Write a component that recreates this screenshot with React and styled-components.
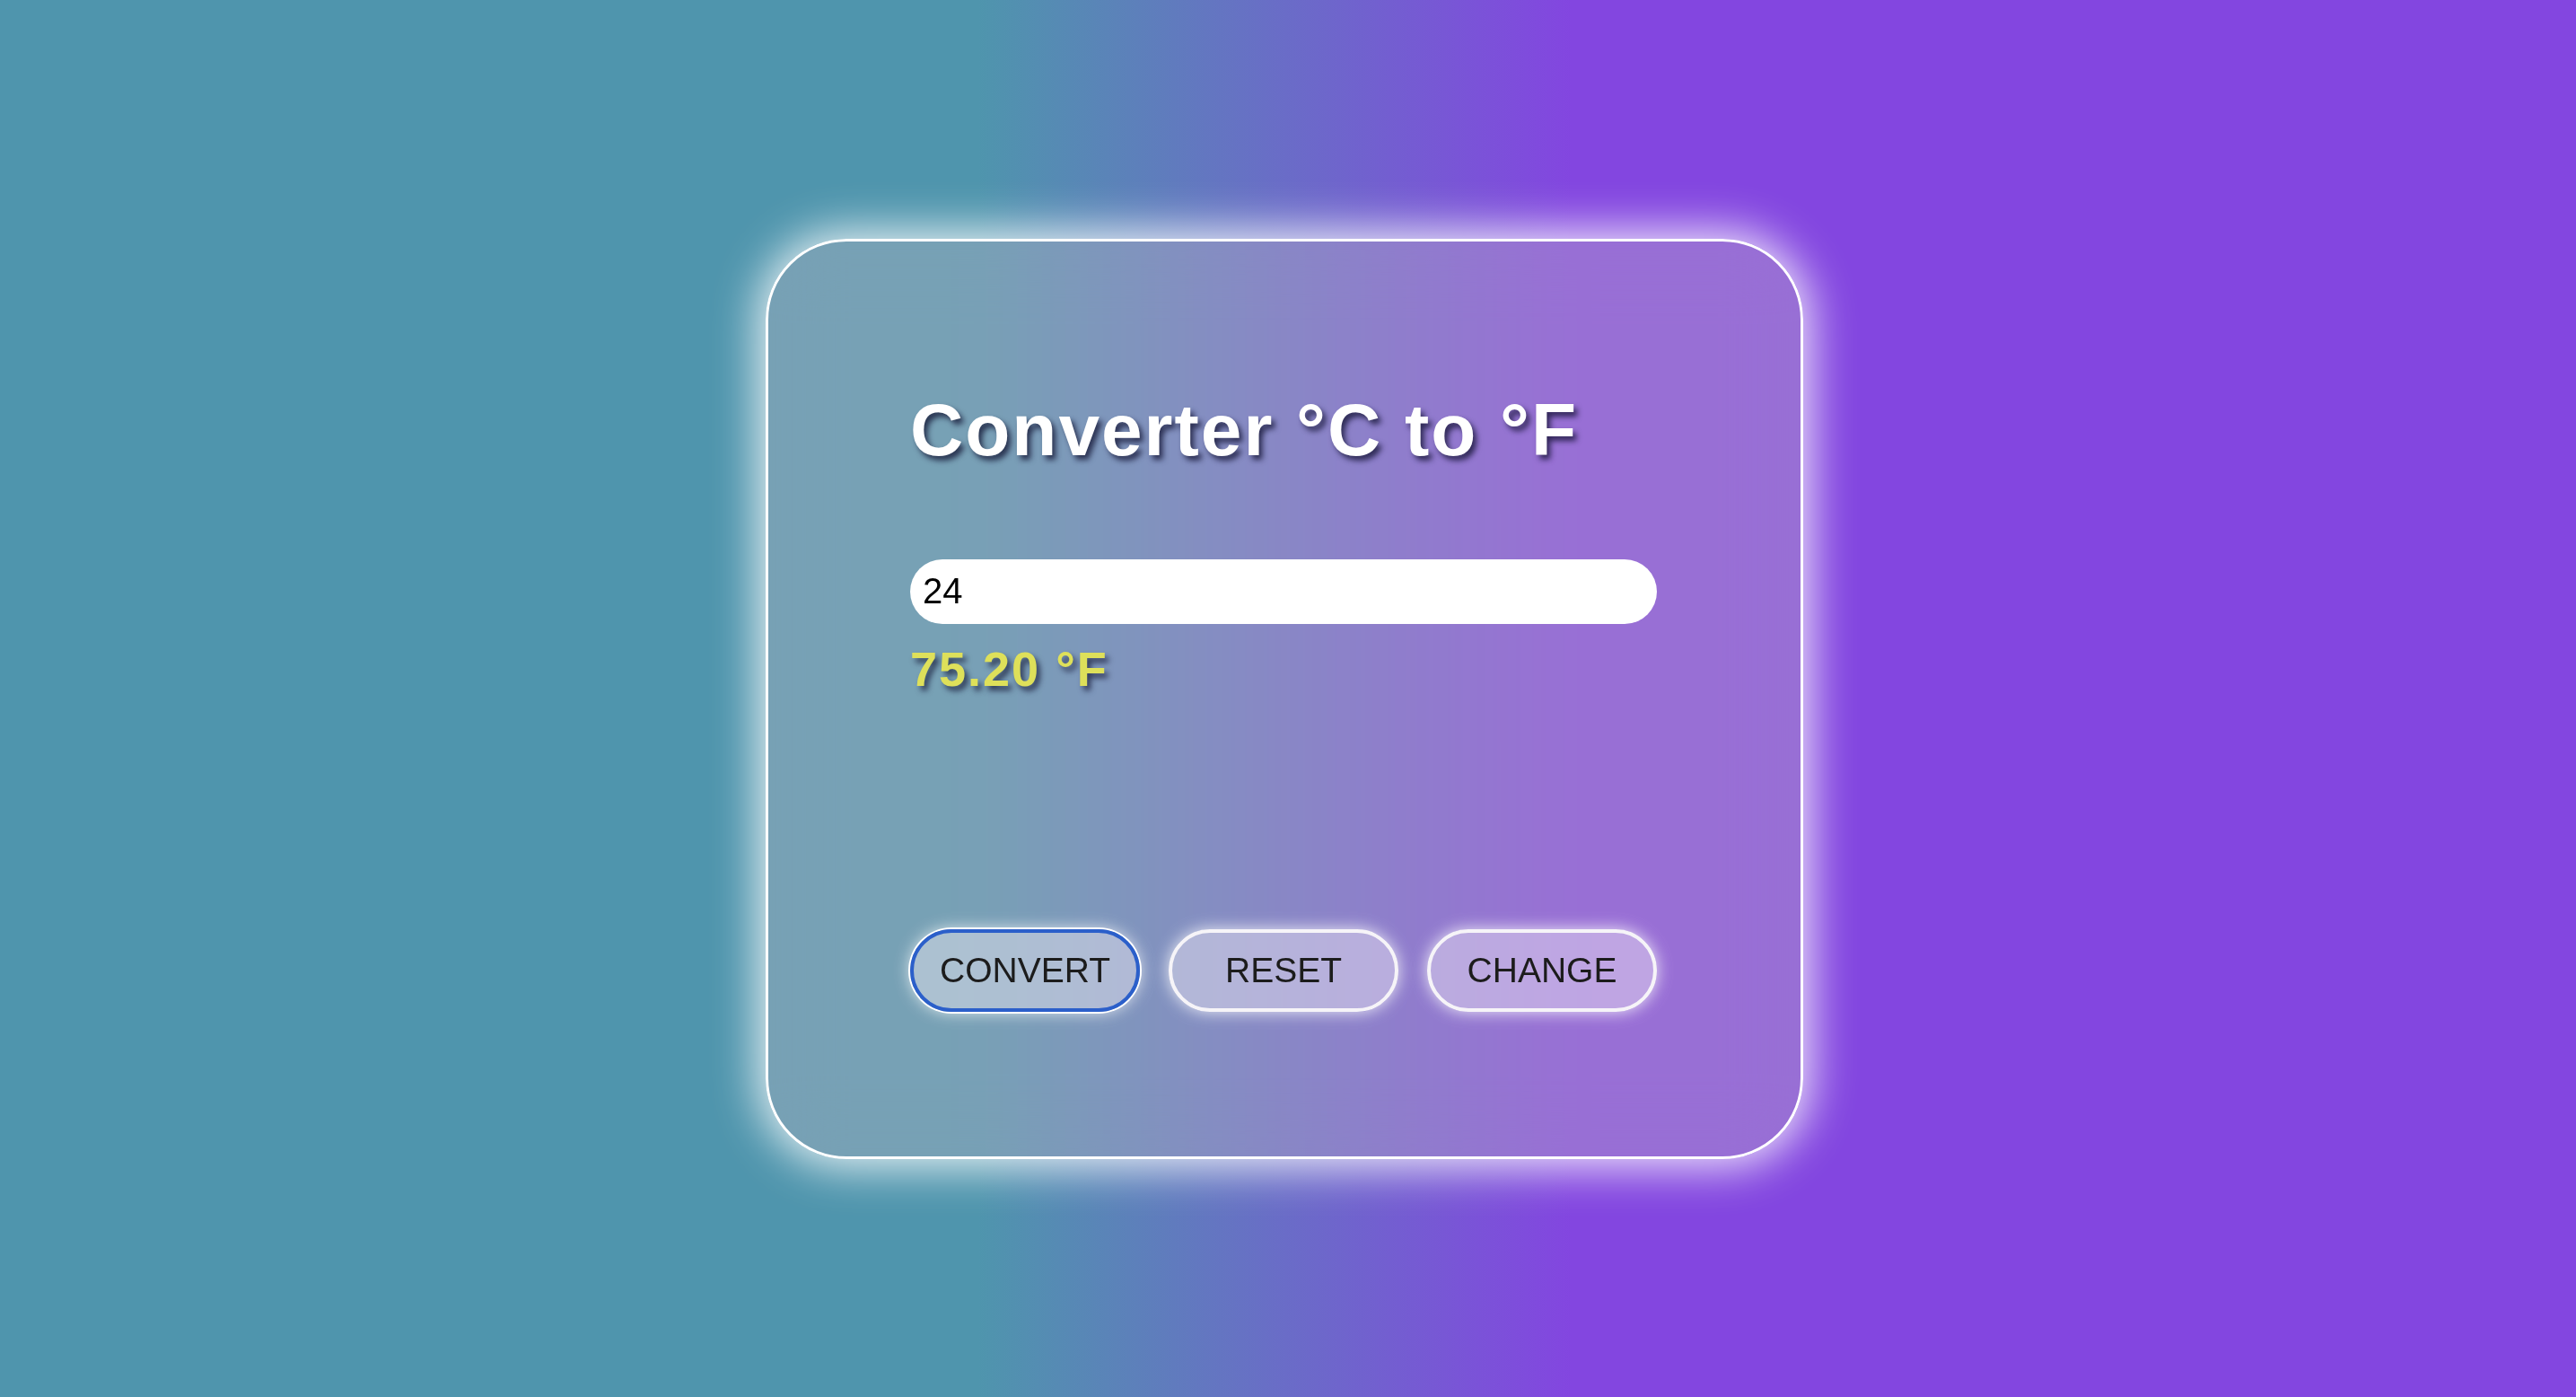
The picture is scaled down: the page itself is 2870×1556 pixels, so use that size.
import React, { useState } from 'react'
import styled, { createGlobalStyle } from 'styled-components'

const GlobalStyle = createGlobalStyle`
  html, body {
    margin: 0;
    padding: 0;
  }
  body {
    font-family: "Liberation Sans", Arial, sans-serif;
  }
`

const Page = styled.div`
  min-height: 100vh;
  display: flex;
  align-items: center;
  justify-content: center;
  background: linear-gradient(90deg, #4f95ad 38%, #8346e0 61%);
  padding-right: 8px;
  box-sizing: border-box;
`

const Card = styled.div`
  box-sizing: border-box;
  width: 1156px;
  height: 1025px;
  padding: 163px 158px 0 158px;
  border: 3px solid #fff;
  border-radius: 90px;
  background: rgba(190, 182, 196, 0.37);
  backdrop-filter: blur(40px);
  box-shadow: 0 0 50px 8px rgba(255, 255, 255, 0.88);
  display: flex;
  flex-direction: column;
`

const Title = styled.h1`
  margin: 0;
  font-size: 82px;
  line-height: 1.15;
  font-weight: 700;
  letter-spacing: 2px;
  color: #fff;
  text-shadow: 4px 5px 6px rgba(15, 15, 45, 0.75);
`

const TempInput = styled.input`
  box-sizing: border-box;
  margin-top: 97px;
  width: 832px;
  height: 72px;
  border: none;
  outline: none;
  border-radius: 36px;
  background: #fff;
  padding: 0 14px;
  font-family: "Liberation Sans", Arial, sans-serif;
  font-size: 40px;
  color: #000;
`

const Result = styled.div`
  margin-top: 19px;
  font-size: 54px;
  line-height: 1.15;
  font-weight: 700;
  letter-spacing: 2px;
  color: #dee05a;
  text-shadow: 4px 5px 6px rgba(15, 15, 45, 0.7);
`

const ButtonRow = styled.div`
  margin-top: 259px;
  display: flex;
  gap: 32px;
`

const Button = styled.button`
  box-sizing: border-box;
  width: 256px;
  height: 92px;
  border-radius: 46px;
  border: 4px solid ${p => (p.$active ? '#2b5fca' : '#f6f4f8')};
  background: rgba(238, 232, 244, 0.45);
  box-shadow: ${p => (p.$active ? '0 0 0 2px #fff, ' : '')}0 0 18px rgba(255, 255, 255, 0.85);
  font-family: "Liberation Sans", Arial, sans-serif;
  font-size: 39px;
  color: #1c1c1c;
  cursor: pointer;
  outline: none;
  padding: 0;
`

const App = () => {
  const [value, setValue] = useState('24')
  const [toF, setToF] = useState(true)
  const [result, setResult] = useState('75.20 °F')

  const convert = () => {
    const n = parseFloat(value)
    if (isNaN(n)) return setResult('')
    if (toF) setResult(`${(n * 9 / 5 + 32).toFixed(2)} °F`)
    else setResult(`${((n - 32) * 5 / 9).toFixed(2)} °C`)
  }

  return (
    <Page>
      <GlobalStyle />
      <Card>
        <Title>{toF ? 'Converter °C to °F' : 'Converter °F to °C'}</Title>
        <TempInput value={value} onChange={e => setValue(e.target.value)} />
        <Result>{result}</Result>
        <ButtonRow>
          <Button $active onClick={convert}>CONVERT</Button>
          <Button onClick={() => { setValue(''); setResult('') }}>RESET</Button>
          <Button onClick={() => setToF(!toF)}>CHANGE</Button>
        </ButtonRow>
      </Card>
    </Page>
  )
}

export default App
